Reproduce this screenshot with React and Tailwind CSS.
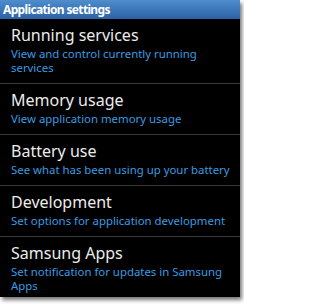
import React from "react";

const items = [
  { title: "Running services", desc: "View and control currently running services" },
  { title: "Memory usage", desc: "View application memory usage" },
  { title: "Battery use", desc: "See what has been using up your battery" },
  { title: "Development", desc: "Set options for application development" },
  { title: "Samsung Apps", desc: "Set notification for updates in Samsung Apps" },
];

export default function App() {
  return (
    <div className="w-[244px] h-[304px] bg-white overflow-hidden" style={{ fontFamily: '"Noto Sans", "DejaVu Sans", sans-serif' }}>
      <div className="w-[240px] h-[297px] bg-black overflow-hidden shadow-[2px_3px_4px_rgba(0,0,0,0.55)]">
        {/* title bar */}
        <div className="h-[19px] px-[3px] flex items-center bg-gradient-to-b from-[#4f8dcc] to-[#2b62a6] text-white text-[12px] font-bold leading-none tracking-[-0.65px]">
          Application settings
        </div>

        {items.map((item, i) => (
          <div
            key={item.title}
            className={`pl-[11px] pr-[4px] pt-[4px] pb-[8px] ${i < items.length - 1 ? "border-b border-[#3a3a3a]" : ""}`}
          >
            <div className="text-[16px] leading-[24px] text-[#ececec]">{item.title}</div>
            <div className="text-[11.4px] leading-[14px] text-[#3a9be2]">{item.desc}</div>
          </div>
        ))}
      </div>
    </div>
  );
}
